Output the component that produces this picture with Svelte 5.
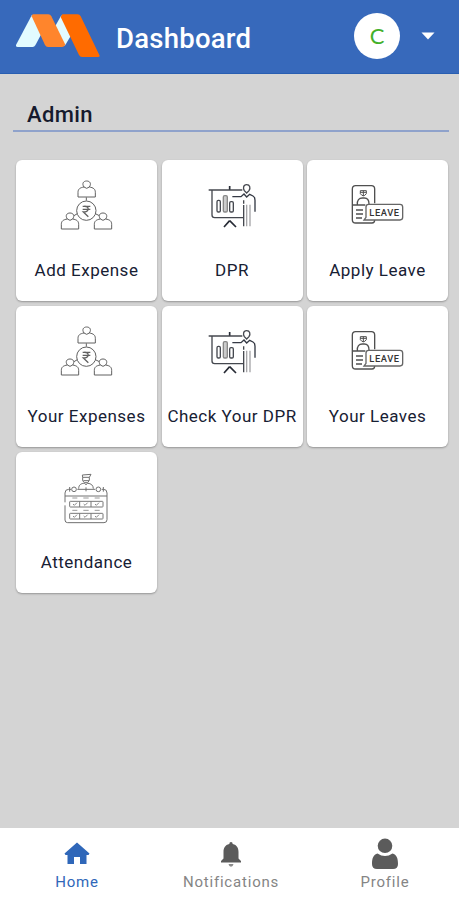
<script lang="ts">
  interface Tile {
    label: string
    icon: 'expense' | 'dpr' | 'leave' | 'attendance'
  }

  const tiles: Tile[] = [
    { label: 'Add Expense', icon: 'expense' },
    { label: 'DPR', icon: 'dpr' },
    { label: 'Apply Leave', icon: 'leave' },
    { label: 'Your Expenses', icon: 'expense' },
    { label: 'Check Your DPR', icon: 'dpr' },
    { label: 'Your Leaves', icon: 'leave' },
    { label: 'Attendance', icon: 'attendance' },
  ]
</script>

<div class="screen">
  <header>
    <svg class="logo" width="84" height="44" viewBox="48 42 252 132">
      <path d="M96 44 L48 135 Q47 141 53 141 H98 Q103 141 106 136 L124 102Z" fill="#e2fbff" />
      <path d="M184 46 L166 78 L194 138 L214 105Z" fill="#e2fbff" />
      <path d="M98 43 H145 Q151 43 154 49 L196 134 Q192 141 186 141 H144 Q138 141 135 135 L95 49Z" fill="#ff852c" />
      <path d="M187 43 H233 Q239 43 242 49 L298 165 Q301 171 294 171 H246 Q240 171 237 165 L182 51Z" fill="#ff6b00" />
    </svg>
    <h1>Dashboard</h1>
    <div class="avatar">C</div>
    <svg class="caret" width="14" height="8" viewBox="0 0 14 8">
      <path d="M0.5 0.5 H13.5 L7 7.5Z" fill="#fff" />
    </svg>
  </header>

  <main>
    <h2>Admin</h2>
    <div class="grid">
      {#each tiles as tile (tile.label)}
        <button class="tile">
          {#if tile.icon === 'expense'}
            <svg width="75" height="70" viewBox="-3 0 225 210" fill="none" stroke="#606060" stroke-width="3">
              {#each [[110, 33], [60, 129], [159, 129]] as [x, y]}
                <g transform="translate({x} {y})">
                  <path d="M-8 18 C-15 8 -10 0 0 0 S15 8 8 18 M-8 18 C-20 20 -26 24 -26 34 V48 H26 V34 C26 24 20 20 8 18 M-8 18 Q0 26 8 18" />
                </g>
              {/each}
              <circle cx="109" cy="122" r="29" />
              <path d="M109 82 V92 M82 131 L72 137 M136 131 L148 137" />
              <path d="M98 109 H121 M98 118 H121 M102 109 C119 107 119 126 100 126 L115 140" stroke-width="4" />
            </svg>
          {:else if tile.icon === 'dpr'}
            <svg width="75" height="70" viewBox="1 0 225 210" fill="none" stroke="#45484f" stroke-width="4">
              <path d="M42 60 H143 M52 60 V135 Q52 143 60 143 H145" />
              <path d="M105 48 V59 M105 152 L88 171 M105 152 L124 171" stroke="#272b35" stroke-width="5" />
              <rect x="67" y="91" width="10" height="35" rx="4" />
              <rect x="86" y="77" width="12" height="49" rx="4" stroke="#888" fill="#ccc" />
              <rect x="105" y="95" width="11" height="31" rx="4" />
              <path d="M156 44 C145 44 145 55 149 62 L156 69 L163 62 C168 54 166 44 156 44Z" />
              <path d="M113 80 H139 L148 72 L156 81 L165 73 L175 78 Q181 81 181 91 V125" stroke="#343944" />
              <path d="M147 91 V101 M147 105 V169" />
              <path d="M156 104 V169 M166 104 V169" stroke="#a5a5a8" />
            </svg>
          {:else if tile.icon === 'leave'}
            <svg width="75" height="70" viewBox="0 0 225 210" fill="none" stroke="#505050" stroke-width="4">
              <path d="M104 100 V57 Q104 47 94 47 H47 Q37 47 37 57 V149 Q37 159 47 159 H96 Q104 159 104 150" />
              <path d="M52 104 C51 91 57 84 67 84 H73 C83 84 87 91 87 102 M37 105 H76" />
              <path d="M61 62 H79 V71 Q70 84 61 71Z M61 67 H79 M70 62 V78" stroke-width="3" />
              <path d="M48 120 H69 M48 132 H69 M48 144 H66" />
              <path d="M86 103 H180 Q188 103 188 111 V142 Q188 150 180 150 H72 L78 142 V111 Q78 103 86 103Z" stroke="#666" />
              <text x="88" y="137" textLength="89" lengthAdjust="spacing" fill="#333" stroke="none">LEAVE</text>
            </svg>
          {:else}
            <svg width="75" height="70" viewBox="-2 4 225 210" fill="none" stroke="#707070" stroke-width="3">
              <path d="M46 125 V97 Q46 86 57 86 H64 M83 86 H136 M156 86 H162 Q172 86 172 97 V177 Q172 186 163 186 H54 Q46 186 46 178 V134 M46 106 H172" />
              <circle cx="73" cy="86" r="7" />
              <circle cx="146" cy="86" r="7" />
              <path d="M60 79 V93 M161 79 V93 M109 80 V92" />
              <path d="M98 43 L124 41 L119 50 H99Z M99 50 V60 L104 66 H114 L119 59 V50 M101 60 H118" />
              <path d="M87 84 C87 72 95 68 104 68 L109 72 L114 68 C124 68 131 74 131 84" />
              <path d="M68 112 H83 M101 112 H117 M135 112 H150 M68 149 H83 M101 149 H117 M135 149 H150" stroke="#999" />
              {#each [122, 158] as y}
                <rect x="60" y={y} width="100" height="17" rx="2" stroke="#777" />
                <path d="M90 {y} v17 M124 {y} v17" stroke="#777" />
                <path d="M70 {y + 8} l4 4 l8 -8 M102 {y + 8} l4 4 l8 -8 M136 {y + 8} l4 4 l8 -8" stroke="#888" />
              {/each}
            </svg>
          {/if}
          <span>{tile.label}</span>
        </button>
      {/each}
    </div>
  </main>

  <nav>
    <button class="active">
      <svg width="32" height="32" viewBox="0 0 32 32" fill="currentColor">
        <path d="M16 4.5 L28.5 15.5 L27.5 17 H25.5 V26 H19 V19 H13 V26 H6.5 V17 H4.5 L3.5 15.5Z" />
      </svg>
      <span>Home</span>
    </button>
    <button>
      <svg width="32" height="32" viewBox="0 0 32 32" fill="currentColor">
        <path d="M16 4 Q17.7 4 17.7 6 C22 7 23.5 10 23.5 14 V20.5 L26 23 V24.5 H6 V23 L8.5 20.5 V14 C8.5 10 10 7 14.3 6 Q14.3 4 16 4Z" />
        <path d="M13.5 26 H18.5 Q18 28.7 16 28.7 T13.5 26Z" opacity="0.7" />
      </svg>
      <span>Notifications</span>
    </button>
    <button>
      <svg width="32" height="32" viewBox="0 0 32 32" fill="currentColor">
        <circle cx="16" cy="7.8" r="7.3" />
        <path d="M8.5 15.5 Q16 20.5 23.5 15.5 C27.5 16.5 29 20 29 26 Q29 31 24 31 H8 Q3 31 3 26 C3 20 4.5 16.5 8.5 15.5Z" />
      </svg>
      <span>Profile</span>
    </button>
  </nav>
</div>

<style>
  :global(body) {
    margin: 0;
  }

  .screen {
    display: flex;
    flex-direction: column;
    height: 900px;
    overflow: hidden;
    background: #d4d4d4;
    font-family: Roboto, "Liberation Sans", sans-serif;
  }

  button {
    margin: 0;
    padding: 0;
    border: none;
    background: none;
    font-family: inherit;
  }

  svg {
    display: block;
    flex: none;
  }

  header {
    display: flex;
    align-items: center;
    box-sizing: border-box;
    height: 74px;
    padding: 0 24px 2px 16px;
    background: #3769bb;
    border-bottom: 1px solid #285eb1;
  }

  h1 {
    margin: 6px 0 0 16px;
    color: #fff;
    font-size: 27.5px;
    font-weight: 500;
    letter-spacing: 0.25px;
  }

  .avatar {
    display: flex;
    align-items: center;
    justify-content: center;
    width: 46px;
    height: 46px;
    margin-left: auto;
    border-radius: 50%;
    background: #fff;
    color: #43b02a;
    font-family: Lato, sans-serif;
    font-size: 22px;
  }

  .caret {
    margin-left: 21px;
  }

  main {
    flex: 1;
    padding: 0 10px 0 13px;
  }

  h2 {
    box-sizing: border-box;
    height: 58px;
    margin: 0;
    padding: 27px 0 0 14px;
    border-bottom: 2px solid #8fa2cb;
    color: #161a2d;
    font-size: 22px;
    font-weight: 500;
    line-height: 28px;
    letter-spacing: 0.4px;
  }

  .grid {
    display: grid;
    grid-template-columns: repeat(3, 141px);
    gap: 5px 4.5px;
    padding: 28px 0 0 3px;
  }

  .tile {
    display: flex;
    flex-direction: column;
    align-items: center;
    height: 141px;
    padding-top: 10px;
    border-radius: 6px;
    background: #fff;
    box-shadow: 0 1px 2px rgba(0, 0, 0, 0.3);
    color: #172033;
  }

  .tile span {
    margin-top: 20px;
    font-size: 17px;
    line-height: 21px;
    letter-spacing: 0.5px;
    white-space: nowrap;
  }

  .tile text {
    font-family: Roboto, sans-serif;
    font-size: 28px;
    font-weight: 500;
  }

  nav {
    display: grid;
    grid-template-columns: repeat(3, 154px);
    height: 72px;
    background: #fff;
  }

  nav button {
    display: flex;
    flex-direction: column;
    align-items: center;
    padding-top: 10px;
    color: #5b5b5b;
  }

  nav span {
    margin-top: 2px;
    color: #858585;
    font-size: 15px;
    line-height: 21px;
    letter-spacing: 0.8px;
  }

  nav .active,
  nav .active span {
    color: #2f67b9;
  }
</style>
